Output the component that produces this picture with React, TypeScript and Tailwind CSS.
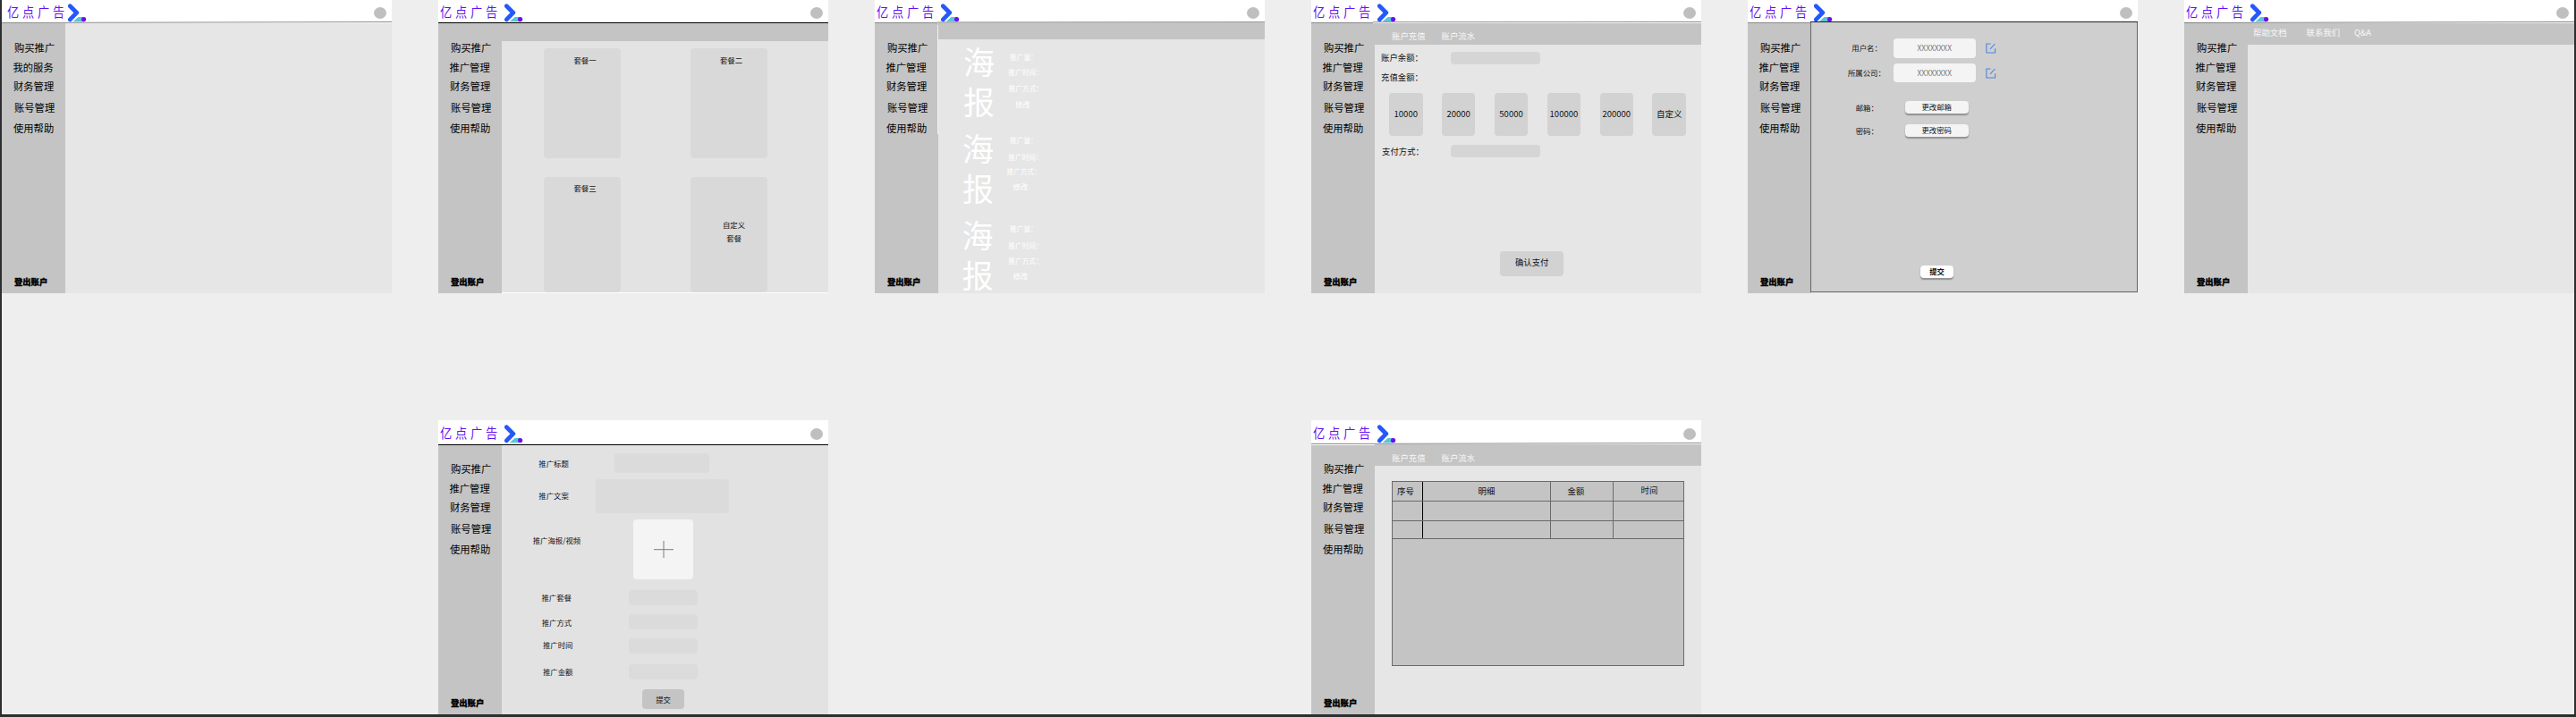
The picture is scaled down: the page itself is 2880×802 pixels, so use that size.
import type { ReactNode } from "react";
import clsx from "clsx";

const MENU = ["购买推广", "推广管理", "财务管理", "账号管理", "使用帮助"];
const MENU_HOME = ["购买推广", "我的服务", "财务管理", "账号管理", "使用帮助"];
const MENU_SPACING = [
  "ml-[14px]",
  "ml-[12.5px] mt-[6px]",
  "ml-[13px] mt-[5px]",
  "ml-[14px] mt-[8.2px]",
  "ml-[13px] mt-[6.5px]",
];

function LogoMark() {
  return (
    <svg className="h-[22px] w-[22px] shrink-0" viewBox="0 0 22 22" fill="none">
      <path d="M2.3 3.7 L9.8 11.2 L2.3 18.9" stroke="#2558fb" strokeWidth="4.8" strokeLinecap="round" strokeLinejoin="round" />
      <path d="M5.6 21.2 L11.5 16 H18 V21.2 Z" fill="#5cc3d9" />
      <circle cx="17.6" cy="18.6" r="2.6" fill="#6912ea" />
    </svg>
  );
}

function Rule({ from, to, color, x = 0 }: { from: number; to: number; color: string; x?: number }) {
  return (
    <svg className="absolute left-0 top-0 h-[30px] w-[436px]" viewBox="0 0 436 30">
      {x > 0 && <line x1="0" x2={x} y1="25.5" y2="25.5" stroke="#8a8a8a" />}
      <line x1={x} x2="436" y1={from} y2={to} stroke={color} />
    </svg>
  );
}

type ScreenProps = {
  menu?: string[];
  lower?: boolean;
  wideLogo?: boolean;
  line: ReactNode;
  children?: ReactNode;
};

function Screen({ menu = MENU, lower, wideLogo, line, children }: ScreenProps) {
  return (
    <section className={clsx("relative flex w-[436px] shrink-0 flex-col", lower ? "h-[329px]" : "h-[328px]")}>
      <header className={clsx("flex shrink-0 items-start bg-white", lower ? "h-[28px] pt-[1.4px]" : "h-[26px]")}>
        <div className={clsx("w-[74px] shrink-0", wideLogo ? "pl-[5.5px]" : "pl-[2px]")}>
          <div className="w-[80px] origin-left scale-x-[0.88] whitespace-nowrap text-[15px] leading-[25px] tracking-[4.3px] text-[#6610f2]">
            亿点广告
          </div>
        </div>
        <div className="pt-[3px]">
          <LogoMark />
        </div>
        <div className="ml-auto mr-[6px] mt-[8px] h-[13px] w-[14px] rounded-[50%] bg-[#c1bfbe]" />
      </header>
      <div className="flex min-h-0 flex-1">
        <nav className={clsx("flex w-[71px] shrink-0 flex-col bg-[#c4c4c4] pb-[4px]", lower ? "pt-[19px]" : "pt-[20px]")}>
          {menu.map((item, i) => (
            <a key={item} className={clsx("whitespace-nowrap pb-[2px] text-[11.3px] leading-[14px] text-black", MENU_SPACING[i])}>
              {item}
            </a>
          ))}
          <a className="ml-[14px] mt-auto whitespace-nowrap pb-[1px] text-[9.3px] font-black leading-[15px] text-black [-webkit-text-stroke:0.3px_black]">
            登出账户
          </a>
        </nav>
        <main className="flex min-w-0 flex-1 flex-col bg-[#e6e6e6]">{children}</main>
      </div>
      {line}
    </section>
  );
}

function Label({ className, children }: { className?: string; children: ReactNode }) {
  return (
    <div className={clsx("shrink-0 whitespace-nowrap pb-[2px] text-[8.4px] leading-[10px]", className)}>{children}</div>
  );
}

function Package({ className, children }: { className: string; children: ReactNode }) {
  return (
    <div className={clsx("flex w-[86px] flex-col items-center rounded-[4px] bg-[#d9d9d9]", className)}>{children}</div>
  );
}

const POSTERS = [
  {
    block: "pl-[28px]",
    title: "-mt-[1.5px]",
    details: "-ml-[135px]",
    rows: ["ml-[151px] mt-[12px]", "ml-[149.3px] mt-[4.6px]", "ml-[149.6px] mt-[6.5px]", "ml-[157px] mt-[5px]"],
  },
  {
    block: "pl-[27px] mt-[7.5px]",
    title: "-mt-[2px]",
    details: "-ml-[134px]",
    rows: ["ml-[151px] mt-[7px]", "ml-[149.3px] mt-[7.2px]", "ml-[147.5px] mt-[4px]", "ml-[154.5px] mt-[4px]"],
  },
  {
    block: "pl-[26.5px] mt-[7px]",
    title: "-mt-[2px]",
    details: "-ml-[133.5px]",
    rows: ["ml-[151px] mt-[9px]", "ml-[149.3px] mt-[7px]", "ml-[149.3px] mt-[5px]", "ml-[154.5px] mt-[4px]"],
  },
];
const POSTER_ROWS = ["推广量：", "推广时间：", "推广方式：", "修改"];

function Posters() {
  return (
    <>
      <div className="-mt-px h-[19px] shrink-0 bg-[#c4c4c4]" />
      <div className="flex flex-col pt-[2px]">
        {POSTERS.map((poster, i) => (
          <article key={i} className={clsx("flex h-[90px] text-white", poster.block)}>
            <div className={clsx("w-[36px] text-[35px] leading-[45px]", poster.title)}>海报</div>
            <div className={poster.details}>
              {POSTER_ROWS.map((text, r) => (
                <p
                  key={text}
                  className={clsx(
                    "whitespace-nowrap leading-[12px]",
                    r === 3 ? "text-[8.4px]" : "text-[7.7px]",
                    poster.rows[r],
                  )}
                >
                  {text}
                </p>
              ))}
            </div>
          </article>
        ))}
      </div>
    </>
  );
}

function Tab({ className, children }: { className?: string; children: ReactNode }) {
  return <a className={clsx("whitespace-nowrap text-[9.4px] leading-[11px] text-[#f7f7f7]", className)}>{children}</a>;
}

function Recharge() {
  return (
    <>
      <div className="flex h-[24px] shrink-0 bg-[#c4c4c4] pl-[19px] pt-[9.3px]">
        <Tab>账户充值</Tab>
        <Tab className="ml-[18px]">账户流水</Tab>
      </div>
      <div className="flex flex-col pt-[8px] text-[9.4px] leading-[12px]">
        <div className="flex h-[14px] pl-[7px]">
          <span className="w-[77.7px]">账户余额：</span>
          <span className="w-[100px] rounded-[4px] bg-[#d5d5d5]" />
        </div>
        <div className="mt-[8px] h-[14px] pl-[7px]">充值金额：</div>
        <div className="mt-[10px] flex gap-[21.4px] pl-[16px]">
          {["10000", "20000", "50000", "100000", "200000", "自定义"].map((amount) => (
            <button
              key={amount}
              className="flex h-[47.5px] w-[37.5px] shrink-0 items-center justify-center rounded-[4px] bg-[#d2d2d2] pb-[2px] text-[9.5px]"
            >
              {amount}
            </button>
          ))}
        </div>
        <div className="mt-[10.8px] flex h-[14px] pl-[8px]">
          <span className="w-[76.7px] pt-[0.5px]">支付方式：</span>
          <span className="w-[100px] rounded-[4px] bg-[#d5d5d5]" />
        </div>
        <button className="ml-[140.3px] mt-[104.7px] flex h-[28px] w-[70.7px] items-center justify-center rounded-[4px] bg-[#d2d2d2] pb-[3px]">
          确认支付
        </button>
      </div>
    </>
  );
}

function EditIcon() {
  return (
    <svg className="ml-[11px] h-[12px] w-[12px] shrink-0" viewBox="0 0 12 12" fill="none" stroke="#4f83dc" strokeWidth="1.1">
      <path d="M5.5 1 H0.9 V11 H10.6 V6.2" />
      <path d="M5 6.9 L10.4 1" />
    </svg>
  );
}

function Account() {
  return (
    <div className="-ml-px -mt-[2px] mb-[1.5px] flex flex-1 flex-col border border-[#666] border-t-[#222] bg-[#cfcfcf] pt-[18px]">
      <div className="flex h-[21.5px] items-center">
        <Label className="w-[92px] pl-[45.3px]">用户名：</Label>
        <div className="flex h-full w-[91.5px] items-center justify-center rounded-[4px] bg-[#f4f4f4] text-[8.4px] text-[#777]">XXXXXXXX</div>
        <EditIcon />
      </div>
      <div className="mt-[6.3px] flex h-[21.5px] items-center">
        <Label className="w-[92px] pl-[41px]">所属公司：</Label>
        <div className="flex h-full w-[91.5px] items-center justify-center rounded-[4px] bg-[#f4f4f4] text-[8.4px] text-[#777]">XXXXXXXX</div>
        <EditIcon />
      </div>
      <div className="mt-[20.5px] flex h-[14px] items-center">
        <Label className="w-[104.7px] pl-[49.7px] pt-[2px]">邮箱：</Label>
        <button className="h-full w-[71px] rounded-[4px] bg-[#f4f4f4] pb-px text-[8.4px] leading-[13px] shadow-[0_1.3px_1.3px_rgba(0,0,0,0.3)]">更改邮箱</button>
      </div>
      <div className="mt-[12.5px] flex h-[14px] items-center">
        <Label className="w-[104.7px] pl-[49.7px] pt-[2px]">密码：</Label>
        <button className="h-full w-[71px] rounded-[4px] bg-[#f4f4f4] pb-px text-[8.4px] leading-[13px] shadow-[0_1.3px_1.3px_rgba(0,0,0,0.3)]">更改密码</button>
      </div>
      <button className="ml-[122px] mt-[143.5px] h-[14.5px] w-[37px] rounded-[4px] bg-white pb-px text-[8.4px] font-bold leading-[13px] shadow-[0_1.3px_1.3px_rgba(0,0,0,0.3)]">
        提交
      </button>
    </div>
  );
}

function PromotionForm() {
  return (
    <div className="flex flex-1 flex-col bg-[#e2e2e2] pt-[9.3px]">
      <div className="flex h-[22px] items-center">
        <Label className="w-[126px] pl-[41.3px] pt-[2px]">推广标题</Label>
        <div className="h-full w-[106px] rounded-[4px] bg-[#dbdbdb]" />
      </div>
      <div className="mt-[6.4px] flex h-[38.3px] items-center">
        <Label className="w-[104.7px] pl-[41.3px] pt-[1px]">推广文案</Label>
        <div className="h-full w-[149px] rounded-[4px] bg-[#dbdbdb]" />
      </div>
      <div className="mt-[7px] flex h-[66.7px]">
        <Label className="w-[147px] pl-[34.7px] pt-[18px]">推广海报/视频</Label>
        <button className="flex h-full w-[67px] items-center justify-center rounded-[4px] bg-[#f4f4f4]">
          <svg className="h-[19px] w-[22px]" viewBox="0 0 22 19" stroke="#7c7c7c" strokeWidth="1">
            <path d="M0 9.7 H22 M11 0 V19" />
          </svg>
        </button>
      </div>
      <div className="mt-[12px] flex h-[17px]">
        <Label className="w-[142px] pl-[44.5px] pt-[3px]">推广套餐</Label>
        <div className="w-[77px] rounded-[4px] bg-[#dbdbdb]" />
      </div>
      <div className="mt-[10.3px] flex h-[17px]">
        <Label className="w-[142px] pl-[44.7px] pt-[4px]">推广方式</Label>
        <div className="w-[77px] rounded-[4px] bg-[#dbdbdb]" />
      </div>
      <div className="mt-[10px] flex h-[17px]">
        <Label className="w-[142px] pl-[46px] pt-[2px]">推广时间</Label>
        <div className="w-[77px] rounded-[4px] bg-[#dbdbdb]" />
      </div>
      <div className="mt-[12.3px] flex h-[17px]">
        <Label className="w-[142px] pl-[46px] pt-[3px]">推广金额</Label>
        <div className="w-[77px] rounded-[4px] bg-[#dbdbdb]" />
      </div>
      <button className="ml-[157px] mt-[11px] flex h-[22px] w-[47px] items-center justify-center rounded-[4px] bg-[#c4c4c4] text-[8.4px]">
        提交
      </button>
    </div>
  );
}

function LedgerRow({ className, cells }: { className: string; cells?: string[] }) {
  return (
    <div className={clsx("grid grid-cols-[34px_143px_70px_1fr] border-b border-[#6a6a6a]", className)}>
      <div className="border-r border-black pl-[5px]">{cells?.[0]}</div>
      <div className="border-r border-[#6a6a6a] pl-[61.5px]">{cells?.[1]}</div>
      <div className="border-r border-[#6a6a6a] pl-[18.5px]">{cells?.[2]}</div>
      <div className="-mt-[1.3px] pl-[30.5px]">{cells?.[3]}</div>
    </div>
  );
}

function Ledger() {
  return (
    <>
      <div className="-mt-px flex h-[24px] shrink-0 bg-[#c4c4c4] pl-[19px] pt-[9.5px]">
        <Tab>账户充值</Tab>
        <Tab className="ml-[18px]">账户流水</Tab>
      </div>
      <div className="ml-[19px] mt-[17px] h-[207px] w-[327px] border border-[#6a6a6a] bg-[#c4c4c4] text-[9.4px] leading-[21px]">
        <LedgerRow className="h-[22px]" cells={["序号", "明细", "金额", "时间"]} />
        <LedgerRow className="h-[22px]" />
        <LedgerRow className="h-[20px]" />
      </div>
    </>
  );
}

export default function App() {
  return (
    <div className="flex h-[802px] w-[2880px] flex-col overflow-hidden border-x-2 border-b-[3px] border-[#2c2e2f] bg-[#eeeeee] font-['Noto_Sans_CJK_SC',sans-serif] text-[#111]">
      <div className="flex gap-[52px]">
        <Screen menu={MENU_HOME} wideLogo line={<Rule from={25.5} to={24.5} color="#8a8a8a" />} />

        <Screen line={<Rule from={25.5} to={25.5} color="#000" />}>
          <div className="h-[20px] shrink-0 bg-[#c4c4c4]" />
          <div className="grid flex-1 grid-cols-[163.5px_1fr] grid-rows-[144px_1fr] border-b border-white bg-[#e3e3e3] pl-[47px] pt-[8.3px]">
            <Package className="h-[122.5px] pt-[7.7px]">
              <Label className="pl-[6px]">套餐一</Label>
            </Package>
            <Package className="h-[122.5px] pt-[7.7px]">
              <Label className="pl-[6px]">套餐二</Label>
            </Package>
            <Package className="h-[129px] pt-[7.2px]">
              <Label className="pl-[6px]">套餐三</Label>
            </Package>
            <Package className="h-[129px] pt-[48px]">
              <Label className="pl-[12px]">自定义</Label>
              <Label className="mt-[2.5px] pl-[12px]">套餐</Label>
            </Package>
          </div>
        </Screen>

        <Screen
          line={
            <>
              <Rule x={70} from={24.9} to={24.5} color="#9a9a9a" />
              <div className="absolute left-[70px] top-[28px] h-[122px] w-px bg-[#f0f0f0]" />
            </>
          }
        >
          <Posters />
        </Screen>

        <Screen line={<Rule x={69} from={24.7} to={24.5} color="#8a8a8a" />}>
          <Recharge />
        </Screen>

        <Screen line={<Rule x={70} from={24.5} to={24.5} color="#222" />}>
          <Account />
        </Screen>

        <Screen line={<Rule from={25.5} to={24.5} color="#808080" />}>
          <div className="flex h-[24px] shrink-0 bg-[#c4c4c4] pl-[6px] pt-[5.3px]">
            <Tab>帮助文档</Tab>
            <Tab className="ml-[22px]">联系我们</Tab>
            <Tab className="ml-[16px]">Q&amp;A</Tab>
          </div>
        </Screen>
      </div>

      <div className="mt-[142px] flex gap-[540px] pl-[488px]">
        <Screen lower line={<Rule from={27.5} to={27.5} color="#000" />}>
          <PromotionForm />
        </Screen>
        <Screen lower line={<Rule from={26.5} to={25.5} color="#8a8a8a" />}>
          <Ledger />
        </Screen>
      </div>
    </div>
  );
}
